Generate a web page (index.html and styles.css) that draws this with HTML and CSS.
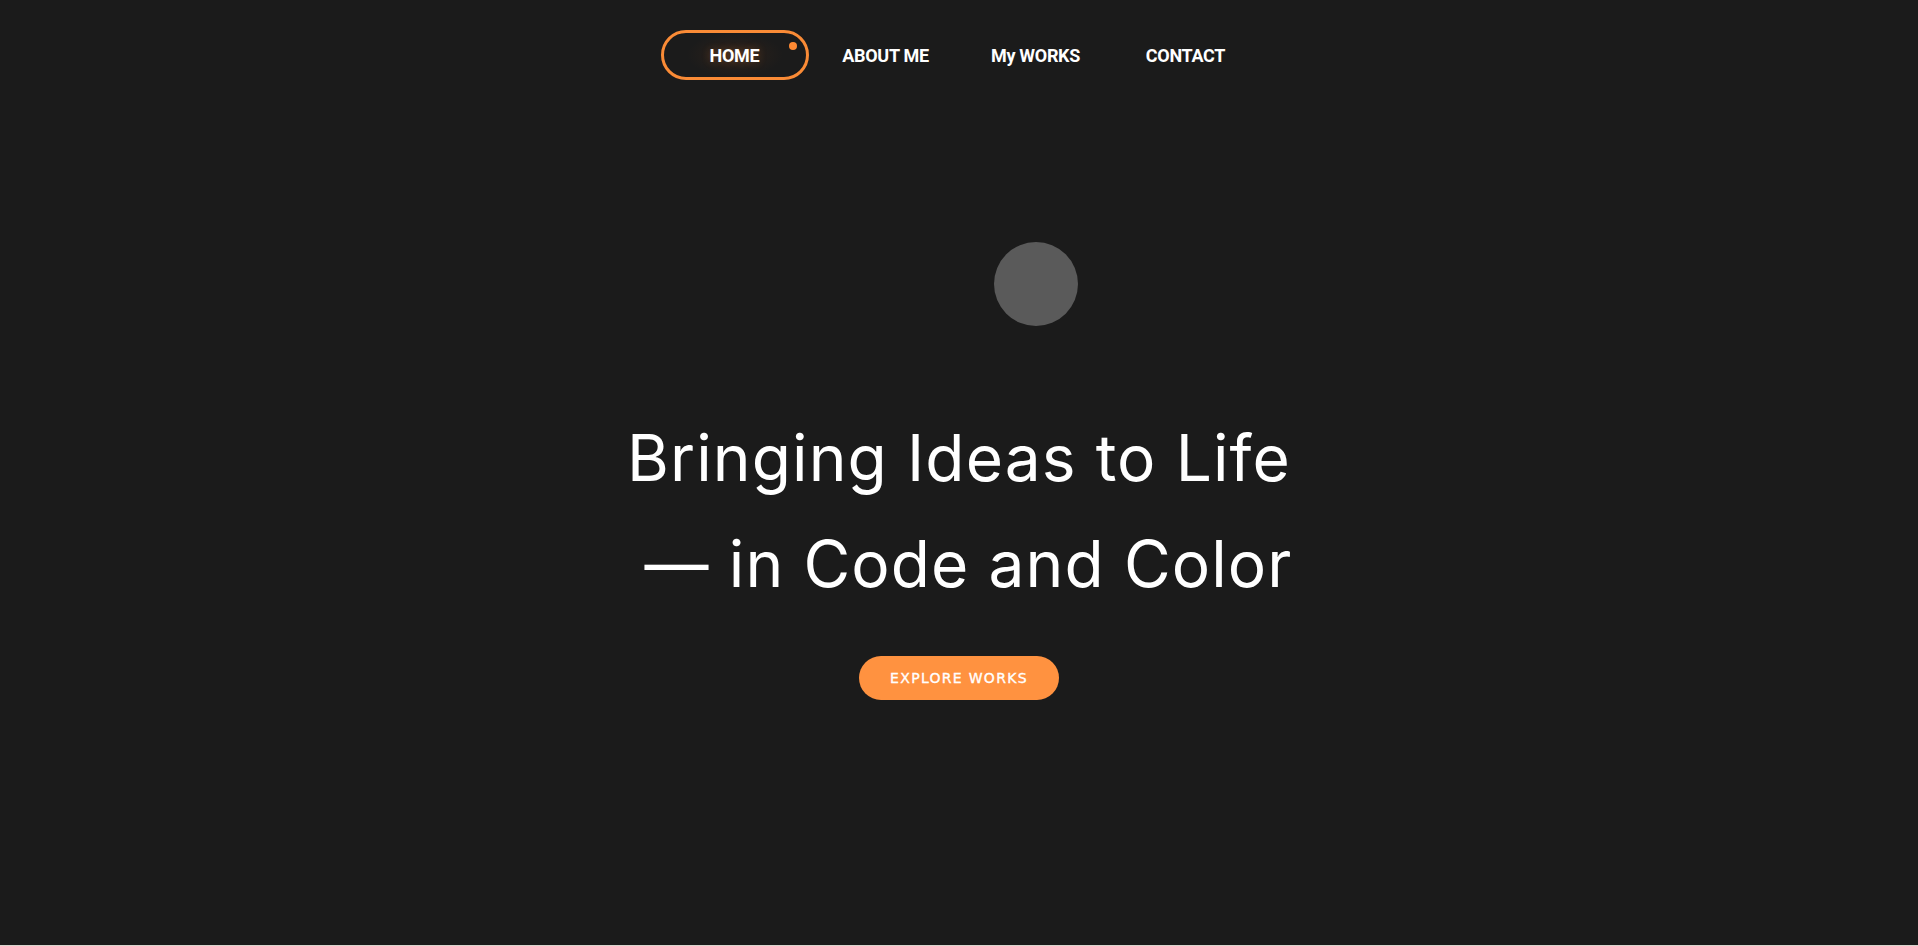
FILE: index.html
```html
<!DOCTYPE html>
<html lang="en">
<head>
<meta charset="utf-8">
<title>Portfolio</title>
<link rel="stylesheet" href="styles.css">
</head>
<body>
<section class="hero">
  <nav class="nav">
    <a class="nav-item active" href="#">HOME<span class="dot"></span></a>
    <a class="nav-item" href="#">ABOUT ME</a>
    <a class="nav-item" href="#">My WORKS</a>
    <a class="nav-item" href="#">CONTACT</a>
  </nav>
  <div class="blob"></div>
  <div class="hero-content">
    <h1 class="title">Bringing Ideas to Life<br>&nbsp;— in Code and Color</h1>
    <a class="cta" href="#">EXPLORE WORKS</a>
  </div>
</section>
<section class="next"></section>
</body>
</html>
```

FILE: styles.css
```css
html, body {
  margin: 0;
  padding: 0;
}
body {
  background: #1b1b1b;
  color: #fff;
  font-family: Roboto, "Liberation Sans", sans-serif;
  overflow: hidden;
}
.hero {
  position: relative;
  height: 945px;
  display: flex;
  flex-direction: column;
  align-items: center;
}
.nav {
  display: flex;
  margin-top: 30px;
  padding-left: 3px;
}
.nav-item {
  position: relative;
  box-sizing: border-box;
  width: 150px;
  height: 50px;
  display: flex;
  align-items: center;
  justify-content: center;
  color: #fff;
  text-decoration: none;
  font-family: Roboto, sans-serif;
  font-weight: 700;
  font-size: 18px;
  letter-spacing: -0.3px;
}
.nav-item.active {
  border: 3px solid #fa8b36;
  border-radius: 25px;
  width: 148px;
  margin-right: 2px;
  text-shadow: 0 0 8px rgba(255, 140, 56, 0.3);
  background: radial-gradient(ellipse 48px 22px at center, rgba(110, 60, 25, 0.22), rgba(0,0,0,0));
}
.dot {
  position: absolute;
  top: 9px;
  right: 9px;
  width: 8px;
  height: 8px;
  border-radius: 50%;
  background: #ff8a33;
}
.blob {
  position: absolute;
  left: 994px;
  top: 242px;
  width: 84px;
  height: 84px;
  border-radius: 50%;
  background: #5a5a5a;
}
.hero-content {
  display: flex;
  flex-direction: column;
  align-items: center;
  margin-top: 325px;
}
.title {
  margin: 0;
  font-family: Inter, sans-serif;
  font-weight: 400;
  font-size: 64px;
  line-height: 106px;
  text-align: center;
  letter-spacing: 1.1px;
}
.cta {
  margin-top: 39px;
  width: 200px;
  height: 44px;
  border-radius: 22px;
  background: #ff9240;
  color: #fff;
  text-decoration: none;
  display: flex;
  align-items: center;
  justify-content: center;
  font-family: "DejaVu Sans", sans-serif;
  font-size: 14px;
  font-weight: 400;
  letter-spacing: 1.3px;
  -webkit-text-stroke: 0.35px #fff;
}
.next {
  height: 1px;
  background: #d9d5cd;
}
```
